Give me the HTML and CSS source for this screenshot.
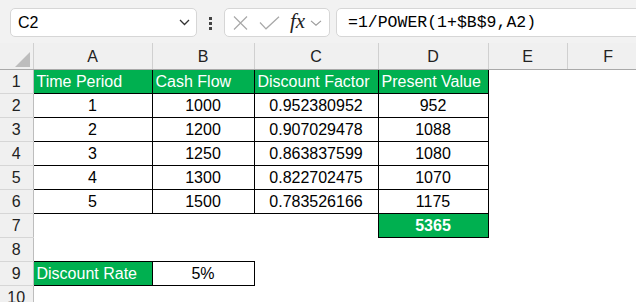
FILE: index.html
```html
<!DOCTYPE html>
<html lang="en">
  <head>
    <meta charset="UTF-8" />
    <meta name="viewport" content="width=device-width, initial-scale=1.0" />
    <title>Present value</title>
    <link rel="stylesheet" href="styles.css">
  </head>
  <body>
    <div class="formulaBar">
      <div class="nameBox">
        <span>C2</span>
        <svg class="chev" width="11" height="7" viewBox="0 0 11 7">
          <path d="M1 1 L5.5 5.5 L10 1" fill="none" stroke="#333" stroke-width="1.3" />
        </svg>
      </div>
      <div class="grip">
        <i></i><i></i><i></i>
      </div>
      <div class="fxBox">
        <svg width="15" height="14" viewBox="0 0 15 14">
          <path d="M1 0.5 L14 13.5 M14 0.5 L1 13.5" stroke="#a8a8a8" stroke-width="1.2" />
        </svg>
        <svg class="check" width="21" height="14" viewBox="0 0 21 14">
          <path d="M1 6.5 L7 12.8 L20 0.8" fill="none" stroke="#a8a8a8" stroke-width="1.2" />
        </svg>
        <span class="fx">fx</span>
        <svg width="12" height="6" viewBox="0 0 12 6">
          <path d="M1 0.8 L6 5.2 L11 0.8" fill="none" stroke="#9a9a9a" stroke-width="1.1" />
        </svg>
      </div>
      <div class="formula">=1/POWER(1+$B$9,A2)</div>
    </div>

    <table class="sheet">
      <colgroup>
        <col style="width: 33px" />
        <col style="width: 119px" />
        <col style="width: 102px" />
        <col style="width: 124px" />
        <col style="width: 110px" />
        <col style="width: 79px" />
        <col style="width: 82px" />
      </colgroup>
      <tr class="colHeads">
        <th class="corner">
          <svg width="17" height="16" viewBox="0 0 17 16">
            <polygon points="16,0 16,15 1,15" fill="#bdbdbd" />
          </svg>
        </th>
        <th>A</th><th>B</th><th>C</th><th>D</th><th>E</th><th>F</th>
      </tr>
      <tr>
        <th class="rowHead">1</th>
        <td class="box head">Time Period</td>
        <td class="box head">Cash Flow</td>
        <td class="box head">Discount Factor</td>
        <td class="box head">Present Value</td>
        <td></td><td></td>
      </tr>
      <tr>
        <th class="rowHead">2</th>
        <td class="box">1</td><td class="box">1000</td><td class="box">0.952380952</td><td class="box">952</td>
        <td></td><td></td>
      </tr>
      <tr>
        <th class="rowHead">3</th>
        <td class="box">2</td><td class="box">1200</td><td class="box">0.907029478</td><td class="box">1088</td>
        <td></td><td></td>
      </tr>
      <tr>
        <th class="rowHead">4</th>
        <td class="box">3</td><td class="box">1250</td><td class="box">0.863837599</td><td class="box">1080</td>
        <td></td><td></td>
      </tr>
      <tr>
        <th class="rowHead">5</th>
        <td class="box">4</td><td class="box">1300</td><td class="box">0.822702475</td><td class="box">1070</td>
        <td></td><td></td>
      </tr>
      <tr>
        <th class="rowHead">6</th>
        <td class="box">5</td><td class="box">1500</td><td class="box">0.783526166</td><td class="box">1175</td>
        <td></td><td></td>
      </tr>
      <tr>
        <th class="rowHead">7</th>
        <td></td><td></td><td></td>
        <td class="box total">5365</td>
        <td></td><td></td>
      </tr>
      <tr>
        <th class="rowHead">8</th>
        <td></td><td></td><td></td><td></td><td></td><td></td>
      </tr>
      <tr>
        <th class="rowHead">9</th>
        <td class="box head">Discount Rate</td>
        <td class="box">5%</td>
        <td></td><td></td><td></td><td></td>
      </tr>
      <tr>
        <th class="rowHead">10</th>
        <td></td><td></td><td></td><td></td><td></td><td></td>
      </tr>
    </table>
  </body>
</html>
```

FILE: styles.css
```css
body {
  margin: 0;
  width: 636px;
  height: 302px;
  overflow: hidden;
  background: #fff;
  font-family: "Liberation Sans", Arial, sans-serif;
  color: #000;
}

.formulaBar {
  display: flex;
  align-items: flex-start;
  height: 43px;
  padding: 8px 0 0 10px;
  box-sizing: border-box;
  background: #f2f2f2;
}
.nameBox {
  display: flex;
  align-items: center;
  justify-content: space-between;
  width: 187px;
  height: 29px;
  box-sizing: border-box;
  padding: 0 6px 0 7px;
  background: #fff;
  border: 1px solid #d6d6d6;
  border-radius: 5px;
  font-size: 16px;
}
.grip {
  display: flex;
  flex-direction: column;
  align-items: center;
  gap: 2px;
  width: 27px;
  padding-top: 9px;
}
.grip i {
  display: block;
  width: 3px;
  height: 3px;
  background: #444;
}
.fxBox {
  display: flex;
  align-items: center;
  width: 106px;
  height: 29px;
  box-sizing: border-box;
  padding: 0 0 0 8px;
  background: #fff;
  border: 1px solid #d6d6d6;
  border-radius: 5px;
}
.check {
  margin-left: 11px;
}
.fx {
  margin: -2px 5px 0 10px;
  font-family: "Liberation Serif", "Times New Roman", serif;
  font-style: italic;
  font-size: 21px;
  color: #222;
}
.formula {
  flex: 1;
  height: 29px;
  margin: 0 -20px 0 6px;
  box-sizing: border-box;
  padding: 3px 0 0 11px;
  background: #fff;
  border: 1px solid #d6d6d6;
  border-radius: 5px;
  font-family: "Liberation Mono", "Courier New", monospace;
  font-size: 16.5px;
  line-height: 22px;
}

.sheet {
  table-layout: fixed;
  width: 649px;
  border-collapse: collapse;
  font-size: 16px;
}
.sheet th,
.sheet td {
  padding: 0;
  height: 23px;
  white-space: nowrap;
  overflow: hidden;
  text-align: center;
  font-weight: normal;
}
.sheet .colHeads th {
  height: 24px;
  background: #f0f0f0;
  color: #222;
  border-left: 1px solid #d0d0d0;
  border-bottom: 1px solid #a9a9a9;
  padding-top: 2px;
}
.sheet .colHeads .corner {
  border-left: none;
  text-align: right;
  vertical-align: bottom;
  padding: 0 2px 1px 0;
}
.corner svg {
  display: block;
  margin-left: auto;
}
.rowHead {
  background: #f0f0f0;
  color: #222;
  border-right: 1px solid #bdbdbd;
  border-bottom: 1px solid #d6d6d6;
}
.box {
  border: 1px solid #000;
}
.sheet .head {
  background: #00b050;
  color: #fff;
  text-align: left;
  padding-left: 3px;
}
.sheet .total {
  background: #00b050;
  color: #fff;
  font-weight: bold;
}
```
